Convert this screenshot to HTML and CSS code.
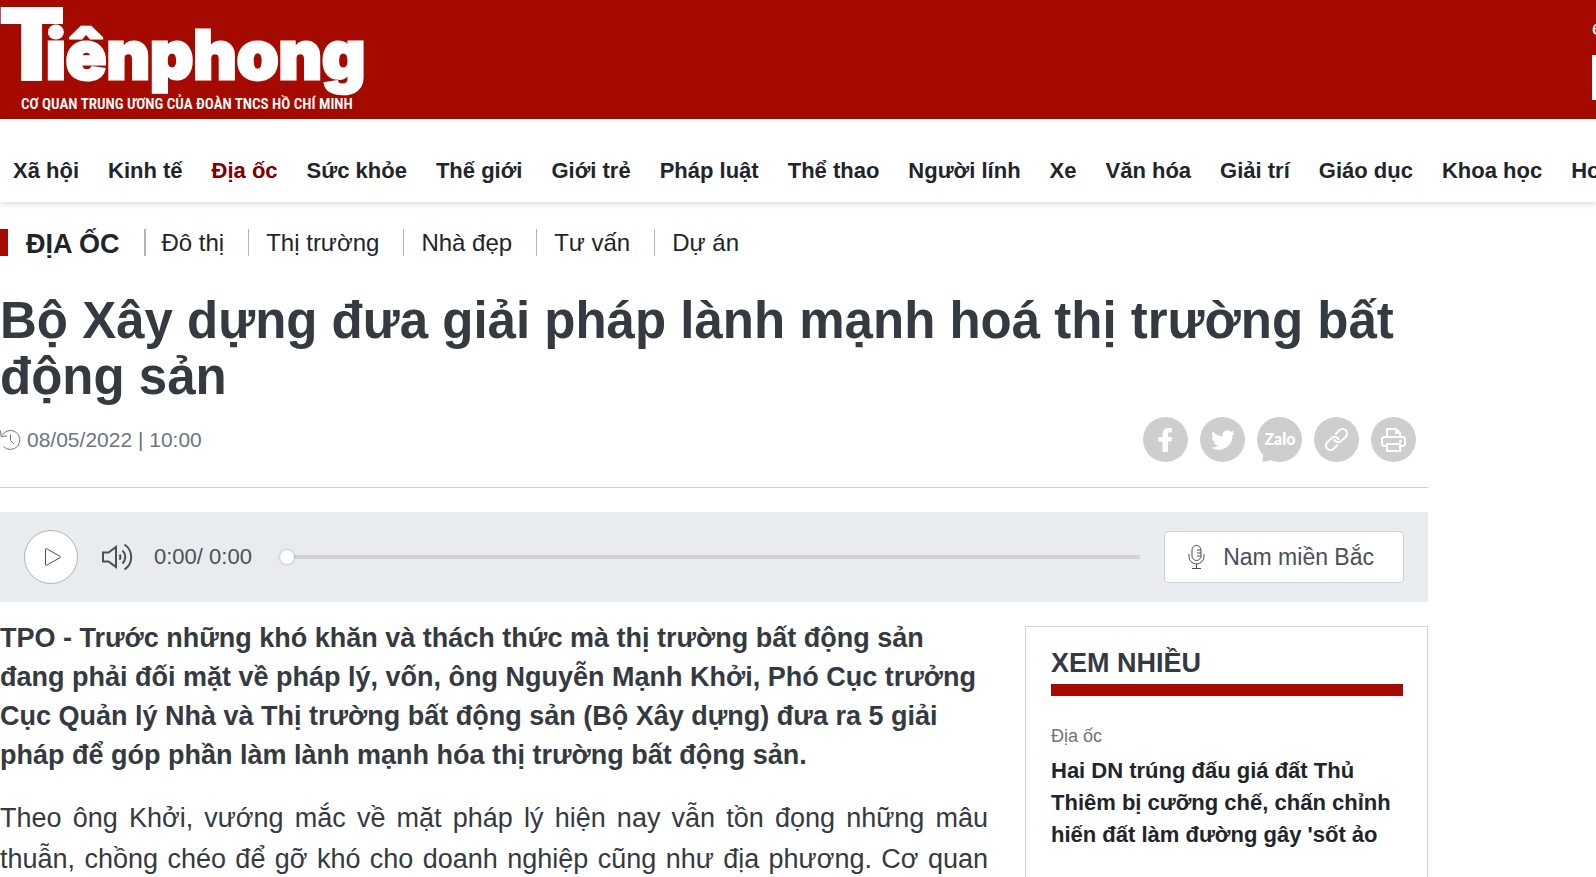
FILE: index.html
```html
<!DOCTYPE html>
<html lang="vi">
  <head>
    <meta charset="UTF-8" />
    <meta name="viewport" content="width=device-width, initial-scale=1.0" />
    <title>Bộ Xây dựng đưa giải pháp lành mạnh hoá thị trường bất động sản</title>

    <link rel="stylesheet" href="styles.css">
  </head>
  <body>
    <header class="header">
      <a class="logo" href="#">
        <svg width="400" height="119" viewBox="0 0 400 119">
          <text class="logo-t" x="1" y="79">T</text>
          <text class="logo-name" x="46" y="79">iênphong</text>
          <text class="logo-sub" x="21" y="109">CƠ QUAN TRUNG ƯƠNG CỦA ĐOÀN TNCS HỒ CHÍ MINH</text>
        </svg>
      </a>
      <div class="tools">
        <a href="#">e</a>
        <input type="text" aria-label="Tìm kiếm" />
      </div>
    </header>

    <nav class="menu">
      <a href="#">Xã hội</a>
      <a href="#">Kinh tế</a>
      <a href="#" class="active">Địa ốc</a>
      <a href="#">Sức khỏe</a>
      <a href="#">Thế giới</a>
      <a href="#">Giới trẻ</a>
      <a href="#">Pháp luật</a>
      <a href="#">Thể thao</a>
      <a href="#">Người lính</a>
      <a href="#">Xe</a>
      <a href="#">Văn hóa</a>
      <a href="#">Giải trí</a>
      <a href="#">Giáo dục</a>
      <a href="#">Khoa học</a>
      <a href="#">Hoa hậu</a>
    </nav>

    <main class="container">
      <div class="breadcrumb">
        <h2><a href="#">ĐỊA ỐC</a></h2>
        <a href="#">Đô thị</a>
        <a href="#">Thị trường</a>
        <a href="#">Nhà đẹp</a>
        <a href="#">Tư vấn</a>
        <a href="#">Dự án</a>
      </div>

      <h1>Bộ Xây dựng đưa giải pháp lành mạnh hoá thị trường bất động sản</h1>

      <div class="meta">
        <svg class="clock" width="21" height="22" viewBox="0 0 21 22">
          <path d="M2 6.500A9.500 9.500 0 1 1 3.500 17.500M0.500 1.500L1 7.500L7 7M10.500 5.500V11.500L14 15" />
        </svg>
        <time>08/05/2022 | 10:00</time>

        <div class="share">
          <a href="#" aria-label="Facebook">
            <svg width="45" height="45" viewBox="0 0 45 45">
              <circle class="disc" cx="22.500" cy="22.500" r="22.500" />
              <path class="fill" d="M19.500 35V24.500H15.500v-4.500h4v-3c0-4 2.500-6 6-6h3.500v4.500h-2.500c-1.300 0-1.500.6-1.500 1.700v2.800h4l-.6 4.500H25v10.500z" />
            </svg>
          </a>
          <a href="#" aria-label="Twitter">
            <svg width="45" height="45" viewBox="0 0 45 45">
              <circle class="disc" cx="22.500" cy="22.500" r="22.500" />
              <path class="fill" transform="translate(11 11)" d="M23.950 4.570a10 10 0 0 1-2.820.77 4.960 4.960 0 0 0 2.160-2.720 9.900 9.900 0 0 1-3.120 1.180 4.920 4.920 0 0 0-8.380 4.480C7.690 8.100 4.070 6.130 1.640 3.160a4.820 4.820 0 0 0-.67 2.480c0 1.710.87 3.210 2.190 4.100a4.900 4.900 0 0 1-2.230-.62v.06a4.920 4.920 0 0 0 3.950 4.830 5 5 0 0 1-2.210.08 4.940 4.940 0 0 0 4.600 3.420A9.870 9.870 0 0 1 0 19.540a14 14 0 0 0 7.550 2.210c9.050 0 14-7.500 14-13.980 0-.21 0-.42-.02-.63a9.900 9.900 0 0 0 2.420-2.570z" />
            </svg>
          </a>
          <a href="#">
            <svg width="45" height="45" viewBox="0 0 45 45">
              <path class="disc" d="M22.500 0a22.500 22.500 0 1 1-9 43.100Q10 45 5 44.500Q6.500 41 6 37.700A22.500 22.500 0 0 1 22.500 0z" />
              <text class="zalo" x="23" y="28">Zalo</text>
            </svg>
          </a>
          <a href="#" aria-label="Sao chép liên kết">
            <svg width="45" height="45" viewBox="0 0 45 45">
              <circle class="disc" cx="22.500" cy="22.500" r="22.500" />
              <g class="line" transform="rotate(-45 22.500 22.500)">
                <path d="M20 27H14a4.500 4.500 0 0 1 0-9H20a4.500 4.500 0 0 1 4 6.500" />
                <path d="M25 18H31a4.500 4.500 0 0 1 0 9H25a4.500 4.500 0 0 1-4-6.500" />
              </g>
            </svg>
          </a>
          <a href="#" aria-label="In bài viết">
            <svg width="45" height="45" viewBox="0 0 45 45">
              <circle class="disc" cx="22.500" cy="22.500" r="22.500" />
              <path class="line" d="M16 20V12h9l4 4v4M25 12v4h4M15.500 29H13.500a2.500 2.500 0 0 1-2.500-2.500V22.500a2.500 2.500 0 0 1 2.500-2.500H31.500a2.500 2.500 0 0 1 2.500 2.500v4a2.500 2.500 0 0 1-2.500 2.500H29.500M16 27h13v7H16z" />
              <circle class="fill" cx="29.500" cy="24" r="1.500" />
            </svg>
          </a>
        </div>
      </div>

      <div class="player">
        <button class="play" aria-label="Phát">
          <svg width="18" height="20" viewBox="0 0 18 20">
            <path d="M1.500 2.200V17.800Q1.500 18.800 2.500 18.300L16 10.700Q17 10 16 9.300L2.500 1.700Q1.500 1.200 1.500 2.200z" />
          </svg>
        </button>
        <button class="volume" aria-label="Âm lượng">
          <svg width="32" height="28" viewBox="0 0 32 28">
            <path d="M1 9.500V18.500H6.500L14 24V4L6.500 9.500zM17.500 11.500a4 4 0 0 1 0 5M20.500 7.500a9 9 0 0 1 0 13M22.500 1.500a15 15 0 0 1 0 25" />
          </svg>
        </button>
        <span class="time">0:00/ 0:00</span>
        <input type="range" min="0" max="100" value="0" aria-label="Thời gian" />
        <button class="voice">
          <svg width="17" height="26" viewBox="0 0 17 26">
            <path d="M4 6a4.500 4.500 0 0 1 9 0V12a4.500 4.500 0 0 1-9 0zM1 10V12.500a7.500 7.500 0 0 0 15 0V10M8.500 20V24.500M4 24.500H13M9 6H13M9 9H13M9 12H13" />
          </svg>
          Nam miền Bắc
        </button>
      </div>

      <div class="content">
        <article>
          <p class="sapo">TPO - Trước những khó khăn và thách thức mà thị trường bất động sản đang phải đối mặt về pháp lý, vốn, ông Nguyễn Mạnh Khởi, Phó Cục trưởng Cục Quản lý Nhà và Thị trường bất động sản (Bộ Xây dựng) đưa ra 5 giải pháp để góp phần làm lành mạnh hóa thị trường bất động sản.</p>
          <p class="text">Theo ông Khởi, vướng mắc về mặt pháp lý hiện nay vẫn tồn đọng những mâu thuẫn, chồng chéo để gỡ khó cho doanh nghiệp cũng như địa phương. Cơ quan</p>
        </article>

        <aside>
          <h3>XEM NHIỀU</h3>
          <a class="cate" href="#">Địa ốc</a>
          <a class="title" href="#">Hai DN trúng đấu giá đất Thủ Thiêm bị cưỡng chế, chấn chỉnh hiến đất làm đường gây 'sốt ảo</a>
        </aside>
      </div>
    </main>
  </body>
</html>
```
FILE: styles.css
```css
* {
  margin: 0;
  padding: 0;
  box-sizing: border-box;
}

body {
  height: 100vh;
  overflow: hidden;
  font-family: "Liberation Sans", Arial, sans-serif;
  color: #343a40;
  background: #fff;
}

a {
  color: inherit;
  text-decoration: none;
}

svg {
  display: block;
  flex-shrink: 0;
}

button {
  font: inherit;
  color: #495057;
  cursor: pointer;
}

.header {
  display: flex;
  justify-content: space-between;
  background: #a50a00;
}

.logo text {
  fill: #fff;
}

.logo-t {
  font: 900 98px Roboto, sans-serif;
  stroke: #fff;
  stroke-width: 4px;
}

.logo-name {
  font: 900 67px Inter, sans-serif;
  stroke: #fff;
  stroke-width: 3px;
}

.logo-sub {
  font: 600 15px "Roboto Condensed", "Open Sans Condensed", "Liberation Sans Narrow", sans-serif;
}

.tools {
  width: 4px;
  overflow: hidden;
  color: #fff;
  font-size: 20px;
  line-height: 24px;
  padding-top: 16px;
}

.tools a {
  display: block;
}

.tools input {
  display: block;
  width: 240px;
  height: 45px;
  margin-top: 15px;
  border: none;
  background: #fff;
}

.menu {
  display: flex;
  gap: 29px;
  padding: 36px 13px 15px;
  overflow: hidden;
  white-space: nowrap;
  font-size: 22px;
  font-weight: bold;
  line-height: 32px;
  color: #212529;
  box-shadow: 0 2px 6px rgba(0, 0, 0, 0.15);
}

.menu .active {
  color: #800000;
}

.container {
  max-width: 1428px;
}

.breadcrumb {
  display: flex;
  align-items: center;
  margin-top: 27px;
  border-left: 8px solid #a50a00;
  font-size: 24px;
  line-height: 27px;
  color: #212529;
}

.breadcrumb h2 {
  height: 27px;
  padding: 0 24px 0 18px;
  font-size: 27px;
  line-height: 31px;
}

.breadcrumb > a {
  padding: 0 24px 0 17px;
  border-left: 1px solid #adb5bd;
}

.breadcrumb h2 + a {
  padding-left: 16px;
  border-left-width: 2px;
}

h1 {
  margin-top: 37px;
  font-size: 51px;
  line-height: 56px;
}

.meta {
  display: flex;
  align-items: center;
  padding: 12px 12px 25px 0;
  border-bottom: 1px solid #ced0d2;
  font-size: 21px;
  color: #6c757d;
}

.clock {
  margin-right: 6px;
  fill: none;
  stroke: #6c757d;
}

.share {
  display: flex;
  gap: 12px;
  margin-left: auto;
}

.disc {
  fill: #cecece;
}

.fill {
  fill: #fff;
}

.line {
  fill: none;
  stroke: #fff;
  stroke-width: 2px;
}

.zalo {
  font: 900 16px Lato, sans-serif;
  fill: #fff;
  text-anchor: middle;
}

.player {
  display: flex;
  align-items: center;
  height: 90px;
  margin-top: 24px;
  padding: 0 24px;
  background: #e9ecef;
  font-size: 23px;
  color: #495057;
}

.player path {
  fill: none;
  stroke: #495057;
  stroke-width: 2px;
}

.play {
  display: flex;
  align-items: center;
  justify-content: center;
  width: 54px;
  height: 54px;
  padding-left: 4px;
  border: 1px solid #adb5bd;
  border-radius: 50%;
  background: #fff;
}

.player .play path {
  stroke-width: 1px;
}

.volume {
  margin: 0 20px 0 24px;
  border: none;
  background: none;
}

.time {
  font-size: 22px;
}

.player input {
  flex: 1;
  min-width: 0;
  height: 14px;
  margin: 0 24px 0 28px;
  appearance: none;
  background: none;
}

.player input::-webkit-slider-runnable-track {
  height: 4px;
  background: #d1d3d5;
}

.player input::-webkit-slider-thumb {
  appearance: none;
  width: 14px;
  height: 14px;
  margin-top: -5px;
  border-radius: 50%;
  background: #fff;
  box-shadow: 0 0 3px rgba(0, 0, 0, 0.3);
}

.voice {
  display: flex;
  align-items: center;
  gap: 18px;
  height: 52px;
  padding: 0 29px 0 23px;
  border: 1px solid #ced0d2;
  border-radius: 4px;
  background: #fff;
}

.player .voice path {
  stroke-width: 1px;
}

.content {
  display: flex;
  justify-content: space-between;
  gap: 37px;
  margin-top: 17px;
}

article {
  flex: 1;
  font-size: 27px;
}

.sapo {
  font-weight: bold;
  line-height: 39px;
}

.text {
  margin-top: 23px;
  line-height: 41px;
  text-align: justify;
  text-align-last: justify;
}

aside {
  width: 403px;
  margin-top: 7px;
  padding: 20px 24px 24px 25px;
  border: 1px solid #ced4da;
}

aside h3 {
  padding-bottom: 5px;
  border-bottom: 12px solid #a50a00;
  font-size: 27px;
  line-height: 32px;
}

.cate,
.title {
  display: block;
}

.cate {
  margin-top: 26px;
  font-size: 18px;
  line-height: 28px;
  color: #6c757d;
}

.title {
  margin-top: 5px;
  font-size: 22px;
  font-weight: bold;
  line-height: 32px;
  color: #212529;
}
```
